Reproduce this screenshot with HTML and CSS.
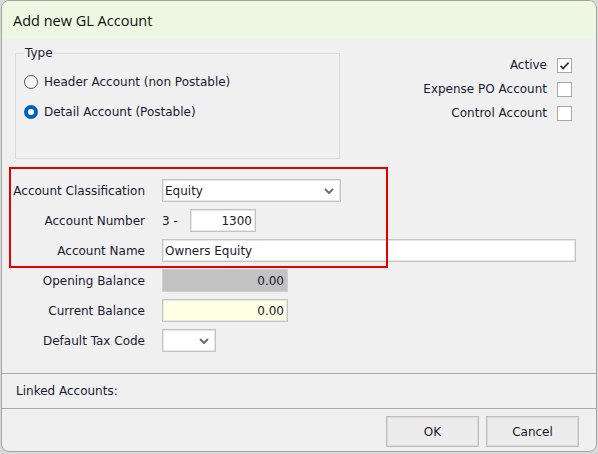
FILE: index.html
```html
<!DOCTYPE html>
<html>
<head>
<meta charset="utf-8">
<link rel="stylesheet" href="styles.css">
</head>
<body>
<div class="window">
  <div class="titlebar">Add new GL Account</div>
  <div class="main">
    <div class="group">
      <span class="legend">Type</span>
      <div class="radio-row first"><span class="radio"></span><span>Header Account (non Postable)</span></div>
      <div class="radio-row second"><span class="radio checked"></span><span>Detail Account (Postable)</span></div>
    </div>
    <div class="flags">
      <div class="flag"><span>Active</span><span class="check on"><svg viewBox="0 0 15 15" width="15" height="15"><path d="M3.5 7.8 L6.2 10.4 L11.6 4.6" fill="none" stroke="#3a3a3a" stroke-width="1.8"/></svg></span></div>
      <div class="flag"><span>Expense PO Account</span><span class="check"></span></div>
      <div class="flag"><span>Control Account</span><span class="check"></span></div>
    </div>
  </div>
  <div class="form">
    <div class="highlight"></div>
    <div class="label">Account Classification</div>
    <div class="field"><div class="input select w-class"><span>Equity</span><svg class="chev" viewBox="0 0 10 6" width="10" height="6"><path d="M1 1 L5 5 L9 1" fill="none" stroke="#6e6e6e" stroke-width="2"/></svg></div></div>
    <div class="label">Account Number</div>
    <div class="field"><span class="prefix">3 -</span><div class="input num w-num">1300</div></div>
    <div class="label">Account Name</div>
    <div class="field"><div class="input w-name">Owners Equity</div></div>
    <div class="label">Opening Balance</div>
    <div class="field"><div class="input num disabled w-bal">0.00</div></div>
    <div class="label">Current Balance</div>
    <div class="field"><div class="input num yellow w-bal">0.00</div></div>
    <div class="label">Default Tax Code</div>
    <div class="field"><div class="input select w-tax"><span></span><svg class="chev" viewBox="0 0 10 6" width="10" height="6"><path d="M1 1 L5 5 L9 1" fill="none" stroke="#6e6e6e" stroke-width="2"/></svg></div></div>
  </div>
  <div class="footer">
    <div class="linked">Linked Accounts:</div>
    <div class="buttons">
      <button class="btn">OK</button>
      <button class="btn">Cancel</button>
    </div>
  </div>
</div>
</body>
</html>
```
FILE: styles.css
```css
html, body {
  margin: 0;
  padding: 0;
}
body {
  background: #d9d9d9;
  width: 598px;
  height: 454px;
  overflow: hidden;
  font-family: "DejaVu Sans", sans-serif;
  font-size: 12px;
  color: #1a1a30;
}
.window {
  margin-left: 1px;
  width: 594px;
  height: 450px;
  border: 1px solid #a3a3a3;
  border-radius: 8px;
  background: #f0f0f0;
  display: flex;
  flex-direction: column;
  overflow: hidden;
}
.titlebar {
  height: 38px;
  flex: none;
  background: #eef7e2;
  padding-left: 11px;
  display: flex;
  align-items: center;
  font-family: "Open Sans", sans-serif;
  font-size: 14.5px;
  color: #111;
}
.main {
  display: flex;
  align-items: flex-start;
  flex: none;
}
.group {
  margin: 14px 0 0 13px;
  width: 323px;
  height: 104px;
  border: 1px solid #dadada;
}
.legend {
  display: inline-block;
  margin: -8px 0 0 8px;
  padding: 0 1px;
  line-height: 15px;
  background: #f0f0f0;
  vertical-align: top;
}
.radio-row {
  display: flex;
  align-items: center;
  gap: 6px;
  height: 16px;
  padding-left: 8px;
}
.radio-row.first { margin-top: 6px; }
.radio-row.second { margin-top: 14px; }
.radio {
  width: 14px;
  height: 14px;
  box-sizing: border-box;
  border-radius: 50%;
  border: 1.5px solid #5a5a5a;
  background: #f4f4f4;
  flex: none;
}
.radio.checked {
  border: 4px solid #0062c1;
  background: #fff;
}
.flags {
  margin: 18px 24px 0 auto;
  display: flex;
  flex-direction: column;
  align-items: flex-end;
  gap: 8px;
}
.flag {
  display: flex;
  align-items: center;
  gap: 10px;
  height: 16px;
}
.check {
  width: 15px;
  height: 15px;
  box-sizing: border-box;
  border: 1px solid #a8a8a8;
  background: #fff;
  position: relative;
}
.check svg {
  position: absolute;
  left: -1px;
  top: -1px;
}
.form {
  position: relative;
  margin-top: 20px;
  display: grid;
  grid-template-columns: 143px 1fr;
  column-gap: 17px;
  row-gap: 7px;
  grid-auto-rows: 23px;
  flex: none;
}
.highlight {
  position: absolute;
  left: 7px;
  top: -12px;
  width: 375px;
  height: 97px;
  border: 2px solid #e30000;
  pointer-events: none;
}
.label {
  display: flex;
  align-items: center;
  justify-content: flex-end;
  white-space: nowrap;
}
.field {
  display: flex;
  align-items: center;
}
.prefix {
  width: 28px;
}
.input {
  height: 23px;
  box-sizing: border-box;
  border: 1px solid #c4c4c4;
  box-shadow: inset 0 0 0 1px #e6e6e6;
  background: #fff;
  display: flex;
  align-items: center;
  padding: 0 3px 0 2px;
  white-space: nowrap;
}
.input.num {
  justify-content: flex-end;
}
.input.select {
  justify-content: space-between;
  padding-right: 6px;
}
.input.disabled {
  background: #c2c2c2;
  border-color: #cfcfcf;
  box-shadow: none;
}
.input.yellow {
  background: #ffffe3;
}
.w-class { width: 179px; }
.w-num { width: 66px; }
.w-name { width: 414px; }
.w-bal { width: 126px; }
.w-tax { width: 54px; }
.chev { flex: none; }
.footer {
  margin-top: auto;
  flex: none;
}
.linked {
  border-top: 1px solid #a9a9a9;
  border-bottom: 1px solid #a9a9a9;
  height: 34px;
  display: flex;
  align-items: center;
  padding-left: 14px;
}
.buttons {
  display: flex;
  justify-content: flex-end;
  gap: 7px;
  padding: 7px 17px 4px 0;
}
.btn {
  width: 93px;
  height: 31px;
  box-sizing: border-box;
  border: 1px solid #bdbdbd;
  box-shadow: inset 0 0 0 1px #dcdcdc;
  background: #ececec;
  font-family: "DejaVu Sans", sans-serif;
  font-size: 12px;
  color: #1a1a30;
  padding: 0;
}
```
